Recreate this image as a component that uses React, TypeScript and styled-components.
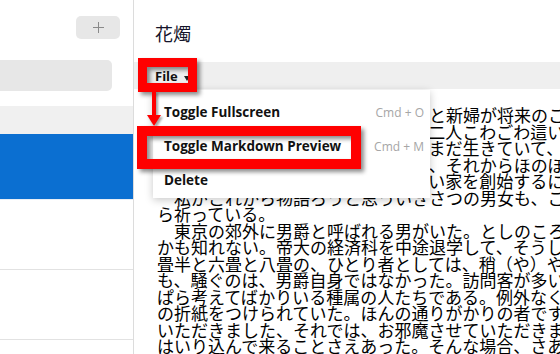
import React from 'react';
import styled, {createGlobalStyle} from 'styled-components';

const GlobalStyle = createGlobalStyle`
	html, body {
		margin: 0;
		padding: 0;
		background: #fff;
		overflow: hidden;
	}
	body {
		font-family: 'Open Sans', 'Noto Sans', sans-serif;
	}
`;

const Window = styled.div`
	position: relative;
	display: flex;
	width: 560px;
	height: 354px;
	overflow: hidden;
	background: #fff;
`;

const Sidebar = styled.div`
	display: flex;
	flex-direction: column;
	width: 133px;
	flex-shrink: 0;
	border-right: 1px solid #dcdcdc;
`;

const SidebarTop = styled.div`
	display: flex;
	justify-content: flex-end;
	padding: 16px 13px 0 0;
`;

const AddButton = styled.button`
	display: flex;
	align-items: center;
	justify-content: center;
	width: 44px;
	height: 23px;
	padding: 0;
	border: none;
	border-radius: 5px;
	background: #e7e7e7;
`;

const Search = styled.div`
	flex-shrink: 0;
	height: 31px;
	margin: 21px 21px 0 -8px;
	border-radius: 5px;
	background: #e7e7e7;
`;

const ListHeader = styled.div`
	flex-shrink: 0;
	height: 28px;
	margin-top: 15px;
	background: #f0f0f0;
`;

const NoteItem = styled.div<{$active?: boolean}>`
	flex-shrink: 0;
	height: ${(p) => (p.$active ? 65 : 69)}px;
	border-bottom: 1px solid ${(p) => (p.$active ? '#e8eef6' : '#e2e2e2')};
	background: ${(p) => (p.$active ? '#0b6fd1' : '#fff')};
`;

const Pane = styled.div`
	display: flex;
	flex-direction: column;
	flex: 1;
	min-width: 0;
	overflow: hidden;
`;

const Title = styled.div`
	display: flex;
	flex-shrink: 0;
	align-items: center;
	height: 62px;
	padding: 4px 0 0 21px;
	box-sizing: border-box;
	font-family: 'Noto Sans CJK JP', sans-serif;
	font-size: 18px;
	color: #14142a;
`;

const Toolbar = styled.div`
	display: flex;
	flex-shrink: 0;
	align-items: center;
	height: 27px;
	padding-left: 21px;
	background: #efefef;
`;

const FileMenu = styled.span`
	display: flex;
	align-items: center;
	gap: 6px;
	font-size: 13px;
	font-weight: 700;
	color: #111;
	text-decoration: underline;
	text-underline-offset: 2px;
`;

const Caret = styled.span`
	width: 0;
	height: 0;
	margin-top: 5px;
	border-left: 3px solid transparent;
	border-right: 3px solid transparent;
	border-top: 5px solid #222;
`;

const Body = styled.div`
	flex-shrink: 0;
	padding: 18px 0 0 23px;
	font-family: 'Noto Sans CJK JP', sans-serif;
	font-size: 17px;
	line-height: 16.5px;
	color: #000;
`;

const Line = styled.div`
	height: 16.5px;
	white-space: nowrap;
`;

const Menu = styled.div`
	position: absolute;
	left: 153px;
	top: 90px;
	width: 277px;
	padding: 5px 0 1px;
	background: #fff;
	box-shadow: 0 2px 8px rgba(0, 0, 0, 0.22);
`;

const MenuItem = styled.div`
	display: flex;
	align-items: center;
	justify-content: space-between;
	height: 34px;
	padding: 0 6px 0 11px;
`;

const ItemLabel = styled.span`
	font-size: 13.5px;
	font-weight: 700;
	color: #111;
`;

const Shortcut = styled.span`
	font-size: 12px;
	color: #a6a6a6;
`;

const Highlight = styled.div<{$thick: number}>`
	position: absolute;
	box-sizing: border-box;
	border: ${(p) => p.$thick}px solid #f00;
	filter: drop-shadow(3px 3px 2px rgba(0, 0, 0, 0.45));
	pointer-events: none;
`;

const Arrow = styled.svg`
	position: absolute;
	left: 146px;
	top: 91px;
	filter: drop-shadow(2px 2px 1px rgba(0, 0, 0, 0.35));
`;

const lines = [
	'　その夜おそく、ふたりきりで花婿と新婦が将来のことを語り合い、',
	'ったのである。行燈を消してから、二人こわごわ這い寄って、',
	'寄る。そのころは花嫁の祖父母も、まだ生きていて、',
	'家は貧しくとも明るかったのである、それからほのぼのと',
	'のと夜が明けて、ふたりはその新しい家を創始するに',
	'　私がこれから物語ろうと思ういきさつの男女も、こころか',
	'ら祈っている。',
	'　東京の郊外に男爵と呼ばれる男がいた。としのころ',
	'かも知れない。帝大の経済科を中途退学して、そうし',
	'畳半と六畳と八畳の、ひとり者としては、稍（や）や',
	'も、騒ぐのは、男爵自身ではなかった。訪問客が多い',
	'ぱら考えてばかりいる種属の人たちである。例外なく',
	'の折紙をつけられていた。ほんの通りがかりの者です',
	'いただきました、それでは、お邪魔させていただきま',
	'はいり込んで来ることさえあった。そんな場合、さあ',
];

const menuItems = [
	{label: 'Toggle Fullscreen', shortcut: 'Cmd + O'},
	{label: 'Toggle Markdown Preview', shortcut: 'Cmd + M'},
	{label: 'Delete', shortcut: ''},
];

export default function App() {
	return (
		<Window>
			<GlobalStyle />
			<Sidebar>
				<SidebarTop>
					<AddButton>
						<svg width="11" height="11" viewBox="0 0 11 11">
							<path d="M5.5 0v11M0 5.5h11" stroke="#8a8a8a" strokeWidth="1" />
						</svg>
					</AddButton>
				</SidebarTop>
				<Search />
				<ListHeader />
				<NoteItem $active />
				<NoteItem />
				<NoteItem />
			</Sidebar>
			<Pane>
				<Title>花燭</Title>
				<Toolbar>
					<FileMenu>
						File
						<Caret />
					</FileMenu>
				</Toolbar>
				<Body>
					{lines.map((l, i) => (
						<Line key={i}>{l}</Line>
					))}
				</Body>
			</Pane>
			<Menu>
				{menuItems.map((m) => (
					<MenuItem key={m.label}>
						<ItemLabel>{m.label}</ItemLabel>
						<Shortcut>{m.shortcut}</Shortcut>
					</MenuItem>
				))}
			</Menu>
			<Highlight $thick={9} style={{left: 138, top: 58, width: 59, height: 34}} />
			<Arrow width="16" height="36" viewBox="0 0 16 36">
				<path d="M6 0h4v25H6z" fill="#f00" />
				<path d="M1 24h14L8 35z" fill="#f00" />
			</Arrow>
			<Highlight $thick={10} style={{left: 137, top: 126, width: 224, height: 43}} />
		</Window>
	);
}
